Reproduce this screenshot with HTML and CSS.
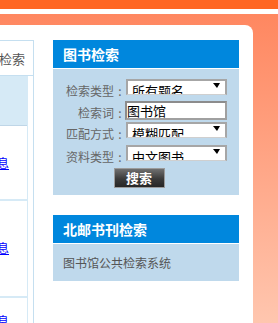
FILE: index.html
```html
<!DOCTYPE html>
<html lang="zh-CN">
<head>
<meta charset="utf-8">
<title>图书检索</title>
<link rel="stylesheet" href="styles.css">
</head>
<body>
<div class="topbar"></div>
<div class="stage">
  <div class="page">
    <aside class="side">
      <div class="tab"><span>图书检索</span></div>
      <div class="list">
        <div class="sub"></div>
        <div class="item item-1"><a href="#">借阅信息</a></div>
        <div class="item item-2"><a href="#">续借信息</a></div>
        <div class="item item-3"><a href="#">预约信息</a></div>
      </div>
    </aside>
    <main class="main">
      <section class="box">
        <h2 class="box-head">图书检索</h2>
        <div class="box-body form">
          <label class="lbl">检索类型<span class="colon">:</span></label>
          <div class="sel"><span class="sel-text">所有题名</span><span class="arrow"></span></div>
          <label class="lbl">检索词<span class="colon">:</span></label>
          <div class="inp">图书馆</div>
          <label class="lbl">匹配方式<span class="colon">:</span></label>
          <div class="sel"><span class="sel-text">模糊匹配</span><span class="arrow"></span></div>
          <label class="lbl">资料类型<span class="colon">:</span></label>
          <div class="sel"><span class="sel-text">中文图书</span><span class="arrow"></span></div>
          <button class="btn" type="button">搜索</button>
        </div>
      </section>
      <section class="box box-2">
        <h2 class="box-head">北邮书刊检索</h2>
        <div class="box-body note">图书馆公共检索系统</div>
      </section>
    </main>
  </div>
</div>
</body>
</html>
```
FILE: styles.css
```css
html, body {
  margin: 0;
  padding: 0;
}
body {
  background: #fff;
  font-family: "Noto Sans CJK SC", "Liberation Sans", sans-serif;
  overflow: hidden;
}
.topbar {
  height: 9px;
  background: #ff6622;
  margin-bottom: 5px;
}
.stage {
  box-sizing: border-box;
  min-height: calc(100vh - 14px);
  padding-top: 11px;
  background: linear-gradient(#ff8760, #ffc7b0);
}
.page {
  width: 253px;
  min-height: 298px;
  background: #fff;
  border-top-right-radius: 8px;
  display: flex;
}
.side {
  box-sizing: border-box;
  width: 34px;
  margin-top: 15px;
  border-top: 1px solid #c5dff0;
  border-right: 1px solid #c5dff0;
  overflow: hidden;
  display: flex;
  flex-direction: column;
}
.tab {
  height: 34px;
  border-bottom: 1px solid #c5dff0;
  display: flex;
  justify-content: flex-end;
  align-items: center;
  padding-right: 8px;
  white-space: nowrap;
  font-size: 13px;
  color: #555;
}
.list {
  box-sizing: border-box;
  width: 28px;
  flex: 1;
  border-right: 1px solid #d6eaf6;
}
.sub {
  height: 49px;
  background: #d6eaf6;
  border-bottom: 1px solid #bfd6e7;
}
.item {
  display: flex;
  justify-content: flex-end;
  align-items: flex-start;
  padding-right: 18px;
  white-space: nowrap;
  font-size: 12px;
  line-height: 14px;
  border-bottom: 2px solid #d6eaf6;
}
.item a {
  color: #0000ff;
  text-decoration: underline;
}
.item-1 { height: 43px; padding-top: 30px; }
.item-2 { height: 55px; padding-top: 40px; }
.item-3 { padding-top: 16px; border-bottom: 0; }

.main {
  width: 186px;
  margin-left: 19px;
  margin-top: 15px;
}
.box-head {
  margin: 0;
  height: 28px;
  line-height: 28px;
  padding-left: 10px;
  background: #0087dd;
  border-bottom: 1px solid #fff;
  color: #fff;
  font-size: 14px;
  font-weight: bold;
}
.box-body {
  background: #bfd9ec;
}
.form {
  display: grid;
  grid-template-columns: 73px 101px;
  grid-template-rows: 22px 21px 23px 23px 20px;
  padding: 10px 0 7px 0;
}
.lbl {
  justify-self: end;
  margin-top: 5px;
  font-size: 12px;
  line-height: 14px;
  color: #666;
  white-space: nowrap;
}
.colon {
  display: inline-block;
  width: 12px;
  text-align: center;
}
.sel {
  box-sizing: border-box;
  width: 101px;
  height: 16px;
  background: #fff;
  border: 2px solid #a6a6a6;
  border-bottom: 1px solid #cfcfcf;
  overflow: hidden;
  display: flex;
  align-items: flex-start;
}
.sel-text {
  flex: 1;
  padding: 2px 0 0 4px;
  font-size: 13px;
  line-height: 16px;
  color: #000;
  white-space: nowrap;
}
.arrow {
  width: 0;
  height: 0;
  margin: 2px 5px 0 0;
  border-left: 4px solid transparent;
  border-right: 3px solid transparent;
  border-top: 5px solid #000;
}
.inp {
  box-sizing: border-box;
  width: 102px;
  height: 19px;
  margin-left: -1px;
  background: #fff;
  border: 2px solid #a0a0a0;
  border-top-color: #8c8c8c;
  border-left-color: #8c8c8c;
  padding-left: 0;
  font-size: 13px;
  line-height: 15px;
  color: #000;
}
.btn {
  grid-column: 1 / 3;
  justify-self: center;
  box-sizing: border-box;
  width: 51px;
  height: 20px;
  margin: 0 0 0 -2px;
  padding: 0;
  border: 1px solid #9b9b9b;
  background: linear-gradient(#707070, #3a3a3a 55%, #262626);
  color: #fff;
  font-family: "Noto Sans CJK SC", sans-serif;
  font-size: 13px;
  font-weight: bold;
  line-height: 18px;
}
.box-2 {
  margin-top: 20px;
}
.note {
  height: 37px;
  line-height: 37px;
  padding-left: 10px;
  font-size: 12px;
  color: #555;
}
```
